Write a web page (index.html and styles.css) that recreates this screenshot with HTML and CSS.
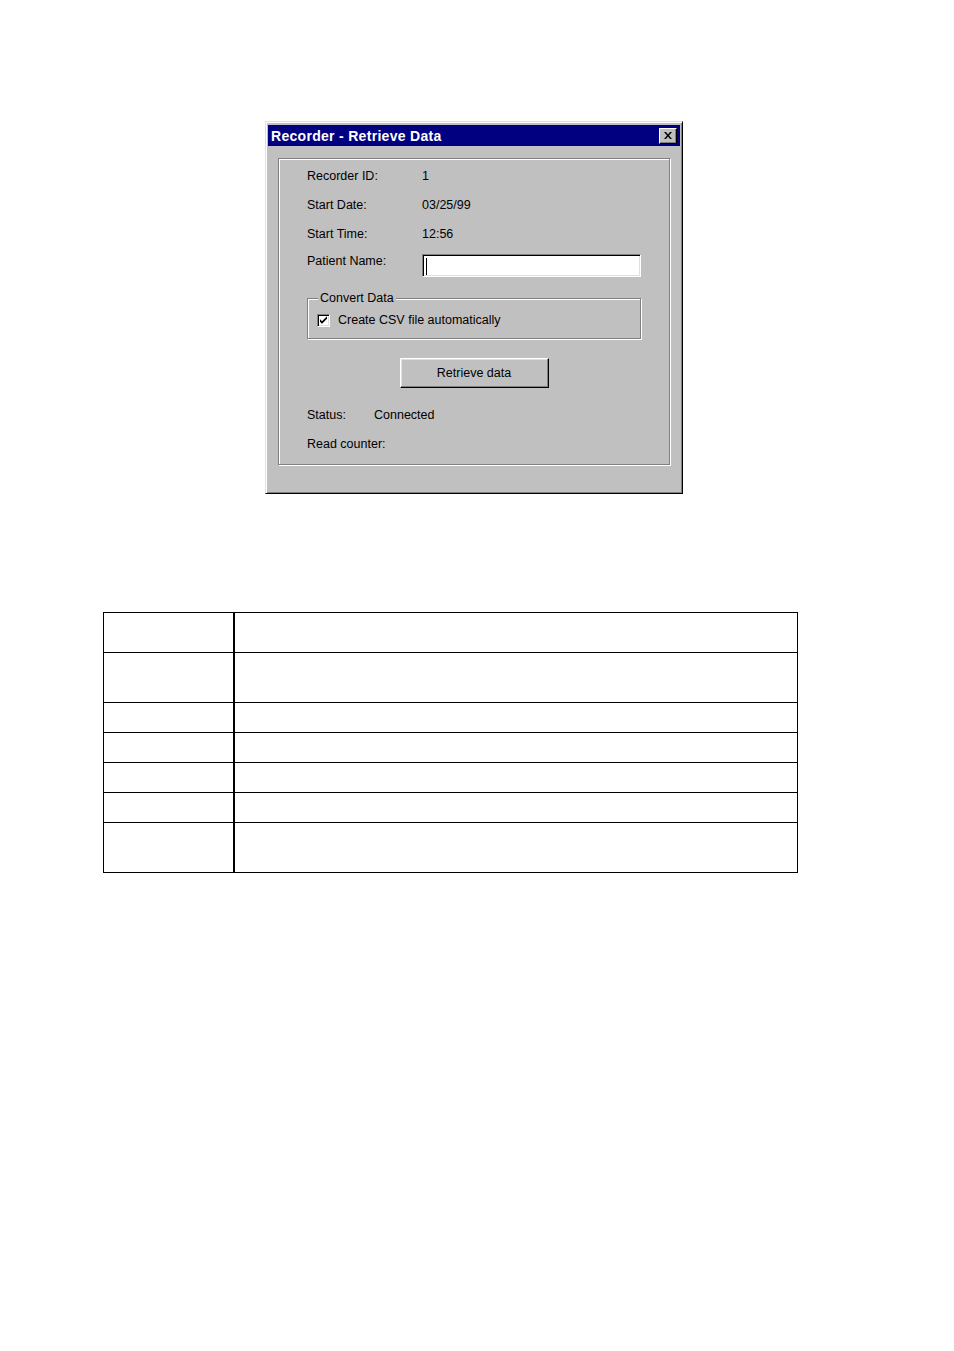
FILE: index.html
```html
<!DOCTYPE html>
<html>
<head>
<meta charset="utf-8">
<link rel="stylesheet" href="styles.css">
</head>
<body>
<div class="page">
  <div class="dialog">
    <div class="titlebar">
      <span class="title">Recorder - Retrieve Data</span>
      <span class="close">
        <svg width="8" height="7" viewBox="0 0 8 7"><path d="M0 0h2l2 2.5L6 0h2L5 3.5 8 7H6L4 4.5 2 7H0l3-3.5z" fill="#000"/></svg>
      </span>
    </div>
    <div class="panel">
      <div class="row"><span class="label">Recorder ID:</span><span class="value">1</span></div>
      <div class="row"><span class="label">Start Date:</span><span class="value">03/25/99</span></div>
      <div class="row"><span class="label">Start Time:</span><span class="value">12:56</span></div>
      <div class="row row-input"><span class="label">Patient Name:</span><span class="input"><span class="caret"></span></span></div>
      <fieldset class="group">
        <legend class="legend">Convert Data</legend>
        <div class="check-row">
          <span class="checkbox">
            <svg width="9" height="9" viewBox="0 0 9 9"><path d="M1 3.2l2 2 5-5v2.6l-5 5-2-2z" fill="#000"/></svg>
          </span>
          <span class="check-label">Create CSV file automatically</span>
        </div>
      </fieldset>
      <div class="btn-row"><span class="button">Retrieve data</span></div>
      <div class="row status-row"><span class="label short">Status:</span><span class="value">Connected</span></div>
      <div class="row"><span class="label">Read counter:</span></div>
    </div>
  </div>

  <table class="grid">
    <tr class="h40"><td class="c1"></td><td></td></tr>
    <tr class="h50"><td class="c1"></td><td></td></tr>
    <tr class="h30"><td class="c1"></td><td></td></tr>
    <tr class="h30"><td class="c1"></td><td></td></tr>
    <tr class="h30"><td class="c1"></td><td></td></tr>
    <tr class="h30"><td class="c1"></td><td></td></tr>
    <tr class="h50"><td class="c1"></td><td></td></tr>
  </table>
</div>
</body>
</html>
```

FILE: styles.css
```css
* { box-sizing: border-box; }
html, body { margin: 0; padding: 0; background: #fff; }
body { font-family: "Liberation Sans", Arial, sans-serif; font-size: 12.5px; color: #000; }
.page { padding-top: 121px; width: 954px; height: 1351px; }

.dialog {
  margin-left: 265px;
  width: 418px;
  height: 373px;
  background: #c0c0c0;
  border: 1px solid #dfdfdf;
  border-right-color: #000;
  border-bottom-color: #000;
  box-shadow: inset 1px 1px 0 #fff, inset -1px -1px 0 #808080;
  padding: 3px 2px 2px 2px;
}
.titlebar {
  height: 21px;
  background: #000080;
  display: flex;
  align-items: center;
  justify-content: space-between;
  padding: 0 3px 0 3px;
}
.title { color: #fff; font-weight: bold; font-size: 14px; letter-spacing: 0.3px; }
.close {
  width: 18px; height: 16px;
  background: #c0c0c0;
  border: 1px solid #fff;
  border-right-color: #000;
  border-bottom-color: #000;
  box-shadow: inset -1px -1px 0 #808080;
  display: flex; align-items: center; justify-content: center;
}

.panel {
  margin: 12px 10px 0 10px;
  height: 307px;
  border: 1px solid #808080;
  box-shadow: inset 1px 1px 0 #fff, 1px 1px 0 #fff;
  padding: 2px 28px 0 28px;
}
.row { height: 29px; display: flex; align-items: center; }
.label { width: 115px; flex: none; }
.label.short { width: 67px; }
.row-input { align-items: flex-start; padding-top: 6px; }
.row-input .label { padding-top: 0; }
.input {
  width: 219px; height: 23px;
  background: #fff;
  border: 1px solid #808080;
  border-right-color: #fff; border-bottom-color: #fff;
  box-shadow: inset 1px 1px 0 #000, inset -1px -1px 0 #dfdfdf;
  padding: 3px 0 0 3px;
}
.caret { display: block; width: 1px; height: 17px; background: #000; }

.group {
  margin: 14px 0 0 0;
  padding: 0 8px 0 9px;
  height: 48px;
  border: 1px solid #808080;
  box-shadow: inset 1px 1px 0 #fff, 1px 1px 0 #fff;
  min-width: 0;
}
.legend { padding: 0 2px; margin-left: 1px; background: #c0c0c0; line-height: 14px; }
.check-row { display: flex; align-items: center; height: 20px; margin-top: 5px; }
.checkbox {
  width: 13px; height: 13px; flex: none;
  background: #fff;
  border: 1px solid #808080;
  border-right-color: #fff; border-bottom-color: #fff;
  box-shadow: inset 1px 1px 0 #000, inset -1px -1px 0 #dfdfdf;
  display: flex; align-items: center; justify-content: center;
  margin-right: 8px;
}

.btn-row { display: flex; justify-content: center; margin-top: 19px; }
.button {
  width: 149px; height: 30px;
  border: 1px solid #fff;
  border-right-color: #000; border-bottom-color: #000;
  box-shadow: inset -1px -1px 0 #808080, inset 1px 1px 0 #dfdfdf;
  display: flex; align-items: center; justify-content: center;
  padding-bottom: 1px;
}
.status-row { margin-top: 12px; }

.grid {
  margin-left: 103px;
  margin-top: 118px;
  width: 695px;
  border-collapse: collapse;
}
.grid td { border: 1px solid #000; padding: 0; }
.grid td.c1 { width: 130px; border-right: 2px solid #000; }
.h40 { height: 40px; }
.h50 { height: 50px; }
.h30 { height: 30px; }
```
